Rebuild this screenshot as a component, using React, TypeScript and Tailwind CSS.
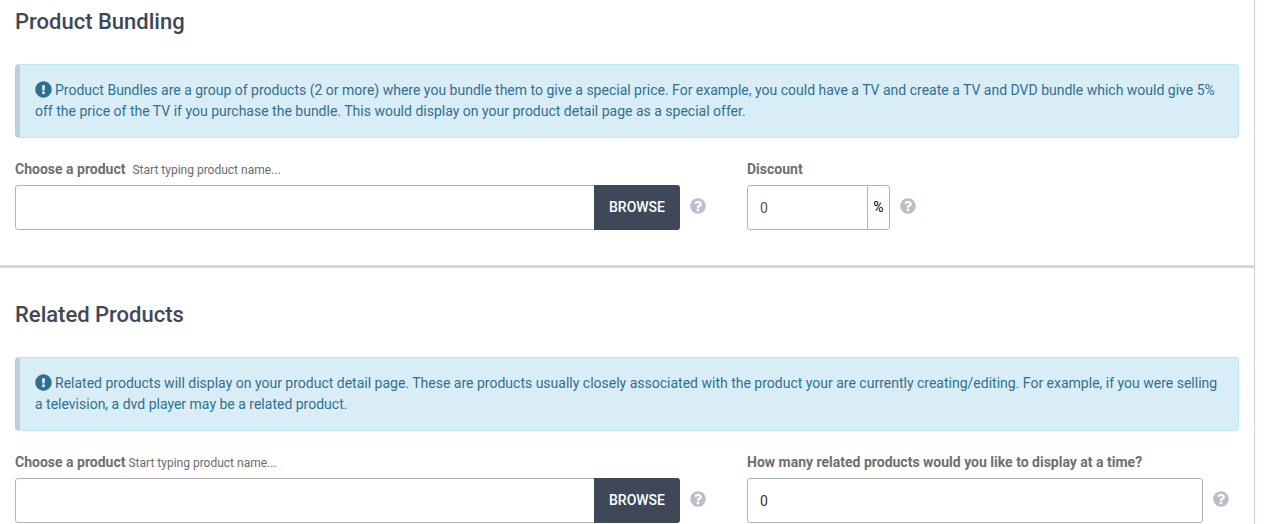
import { FaExclamationCircle, FaQuestionCircle } from "react-icons/fa";

const Help = () => (
  <FaQuestionCircle className="-mt-[4px] text-[16px] text-[#b8bfca] shrink-0" />
);

const Alert = ({ text }: { text: string }) => (
  <div className="mt-[27px] h-[74px] rounded-[4px] border border-[#bce8f1] border-l-[5px] border-l-[#bccfd9] bg-[#d9edf7] pl-[15px] pr-[15px] pt-[15px] text-[14px] leading-[21px] text-[#31708f]">
    <FaExclamationCircle className="inline-block text-[17px] text-[#2f6f8f] mr-[3px] align-[-3px]" />
    {text}
  </div>
);

const ProductPicker = ({ hintGap }: { hintGap: string }) => (
  <div className="w-[732px] shrink-0">
    <div className="h-[21px] text-[14px] leading-[21px] font-bold text-[#6f6f6f] whitespace-nowrap">
      Choose a product
      <span className={`${hintGap} text-[12px] font-normal text-[#6b6b6b]`}>
        Start typing product name...
      </span>
    </div>
    <div className="mt-[5px] flex items-center">
      <div className="h-[45px] w-[580px] rounded-l-[3px] border border-[#b3b3b3] bg-white" />
      <button className="-ml-px h-[45px] w-[86px] rounded-r-[3px] bg-[#3e4858] text-[14px] font-medium text-white">
        BROWSE
      </button>
      <span className="ml-[10px]">
        <Help />
      </span>
    </div>
  </div>
);

const App = () => {
  return (
    <div className="h-[524px] w-[1264px] overflow-hidden bg-white font-['Roboto',sans-serif]">
      <div className="h-[524px] w-[1255px] border-r border-[#c3d5de]">
        <section className="h-[265px] px-[15px] pt-[7px]">
          <h2 className="text-[22px] leading-[30px] font-medium text-[#3e4858]">
            Product Bundling
          </h2>
          <div className="w-[1224px]">
            <Alert text="Product Bundles are a group of products (2 or more) where you bundle them to give a special price. For example, you could have a TV and create a TV and DVD bundle which would give 5% off the price of the TV if you purchase the bundle. This would display on your product detail page as a special offer." />
          </div>
          <div className="mt-[21px] flex">
            <ProductPicker hintGap="ml-[7px]" />
            <div>
              <div className="h-[21px] text-[14px] leading-[21px] font-bold text-[#6f6f6f]">
                Discount
              </div>
              <div className="mt-[5px] flex items-center">
                <input
                  readOnly
                  value="0"
                  className="h-[45px] w-[121px] rounded-l-[3px] border border-[#b3b3b3] bg-white px-[12px] text-[14px] text-[#555555] outline-none"
                />
                <div className="-ml-px flex h-[45px] w-[23px] items-center justify-center rounded-r-[3px] border border-[#b3b3b3] text-[14px] text-black">
                  %
                </div>
                <span className="ml-[10px]">
                  <Help />
                </span>
              </div>
            </div>
          </div>
        </section>

        <div className="h-[3px] bg-[#d5d8db]" />

        <section className="px-[15px] pt-[32px]">
          <h2 className="text-[22px] leading-[30px] font-medium text-[#3e4858]">
            Related Products
          </h2>
          <div className="w-[1224px]">
            <Alert text="Related products will display on your product detail page. These are products usually closely associated with the product your are currently creating/editing. For example, if you were selling a television, a dvd player may be a related product." />
          </div>
          <div className="mt-[21px] flex">
            <ProductPicker hintGap="ml-[3px]" />
            <div>
              <div className="h-[21px] text-[14px] leading-[21px] font-bold text-[#6f6f6f] whitespace-nowrap">
                How many related products would you like to display at a time?
              </div>
              <div className="mt-[5px] flex items-center">
                <input
                  readOnly
                  value="0"
                  className="h-[45px] w-[456px] rounded-[3px] border border-[#b3b3b3] bg-white px-[12px] text-[14px] text-[#333333] outline-none"
                />
                <span className="ml-[10px]">
                  <Help />
                </span>
              </div>
            </div>
          </div>
        </section>
      </div>
    </div>
  );
};

export default App;
